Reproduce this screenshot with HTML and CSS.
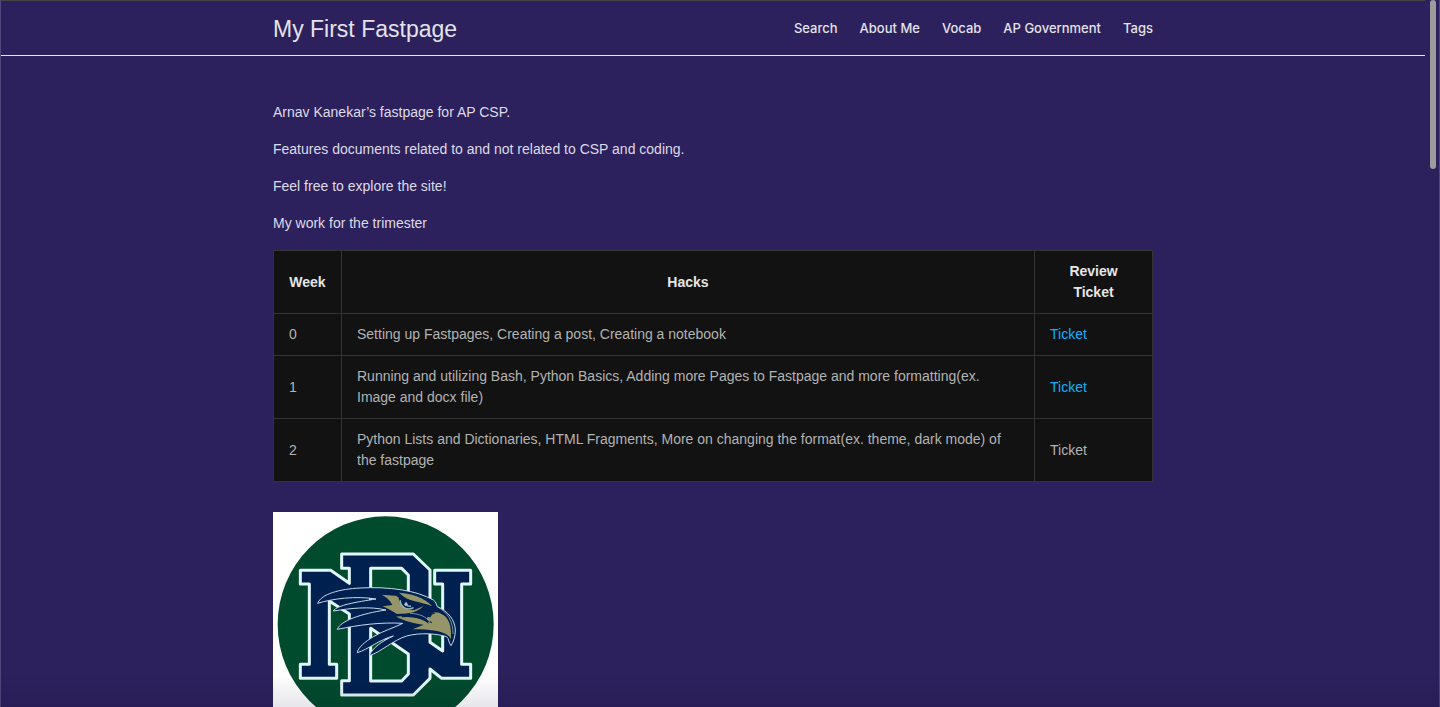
FILE: index.html
```
<!DOCTYPE html>
<html lang="en">
<head>
  <meta charset="utf-8">
  <meta name="viewport" content="width=device-width, initial-scale=1">
  <title>My First Fastpage</title>
  <link rel="stylesheet" href="styles.css">
</head>
<body class="page">
  <header class="site-header">
    <div class="wrapper header-row">
      <a class="site-title" href="#">My First Fastpage</a>
      <nav class="site-nav">
        <a href="#">Search</a>
        <a href="#">About Me</a>
        <a href="#">Vocab</a>
        <a href="#">AP Government</a>
        <a href="#">Tags</a>
      </nav>
    </div>
  </header>
  <main class="wrapper content">
    <p>Arnav Kanekar’s fastpage for AP CSP.</p>
    <p>Features documents related to and not related to CSP and coding.</p>
    <p>Feel free to explore the site!</p>
    <p>My work for the trimester</p>
    <table class="work">
      <colgroup><col class="col-week"><col><col class="col-ticket"></colgroup>
      <thead>
        <tr><th scope="col">Week</th><th scope="col">Hacks</th><th scope="col">Review Ticket</th></tr>
      </thead>
      <tbody>
        <tr><td>0</td><td>Setting up Fastpages, Creating a post, Creating a notebook</td><td><a href="#">Ticket</a></td></tr>
        <tr><td>1</td><td>Running and utilizing Bash, Python Basics, Adding more Pages to Fastpage and more formatting(ex. Image and docx file)</td><td><a href="#">Ticket</a></td></tr>
        <tr><td>2</td><td>Python Lists and Dictionaries, HTML Fragments, More on changing the format(ex. theme, dark mode) of the fastpage</td><td>Ticket</td></tr>
      </tbody>
    </table>
    <svg class="emblem" viewBox="39 36 675 675" role="img" aria-label="School emblem">
      <rect x="39" y="36" width="675" height="675" fill="#fff"/>
      <circle cx="377" cy="373" r="324" fill="#004b2d"/>
      <g stroke="#e2f8f8" stroke-width="9" stroke-linejoin="round">
        <path fill="#00214f" d="M121 211H212L268 250V205H245V162H460L510 210V427L548 453V252H524V211H632V252H605V493H632V535H545L510 507V535L460 585H245V542H268V342L208 303V493H230V535H121V493H148V252H121Z"/>
        <path fill="#004b2d" d="M332 205H425L445 225V310H332ZM332 385L445 462V522L425 543H332Z"/>
      </g>
      <path fill="#00214f" stroke="#c5d9ea" stroke-width="3" stroke-linejoin="round" d="M173 310C183 282 240 267 300 264C385 259 470 271 520 300C528 306 529 313 532 320C564 333 585 360 586 390C586 410 580 427 573 437C566 429 567 416 560 410C532 401 480 397 440 408C400 420 363 456 328 467C338 443 365 424 400 408C358 419 325 448 292 458C293 444 315 425 340 410C372 391 402 384 428 370C362 366 296 375 232 388C241 363 302 341 378 330C330 318 270 325 220 333C231 315 290 306 348 297C285 287 218 296 173 310Z"/>
      <g fill="#96956a">
        <path d="M417 278C454 280 493 292 516 318C484 310 446 306 417 278Z"/>
        <path d="M365 284L415 288C417 315 437 331 463 330L491 318C466 344 430 340 411 342C398 335 384 326 368 319L397 315C390 300 381 293 365 284Z"/>
        <path d="M408 350C447 344 484 355 506 371L500 355C511 336 530 331 546 343C567 354 575 378 573 417C562 397 528 388 458 388L491 374C461 371 432 361 408 350Z"/>
      </g>
      <path fill="none" stroke="#9bb3c2" stroke-width="4" d="M421 301C420 319 439 333 461 323M439 306C435 315 444 321 453 318"/>
      <circle cx="438" cy="313" r="5" fill="#b6c5ca"/>
      <path fill="#00214f" d="M502 351C507 341 517 337 527 340L517 343L511 352Z"/>
      <path fill="none" stroke="#00214f" stroke-width="4" d="M425 350C462 347 490 354 515 368M411 288C440 302 475 307 509 318"/>
      <path fill="none" stroke="#b6c5ca" stroke-width="2" d="M450 340C480 341 498 350 511 367M533 321C564 337 579 365 579 402"/>
    </svg>
  </main>
  <div class="scroll-thumb" aria-hidden="true"></div>
  <div class="edge-shade" aria-hidden="true"></div>
</body>
</html>
```
FILE: styles.css
```
* { box-sizing: border-box; }

html { background: #2c215c; }

.page {
  height: 100vh;
  margin: 0;
  padding-right: 14px;
  overflow: auto;
  scrollbar-width: none;
  border-left: 1px solid #51477a;
  border-right: 1px solid #51477a;
  background: #2c215c;
  color: #dedbe6;
  font: 14px/21px "Liberation Sans", Arial, sans-serif;
}

.wrapper {
  max-width: 880px;
  margin: 0 auto;
}

.site-header {
  border-top: 1px solid #444;
  border-bottom: 1px solid #e8e6ee;
}

.header-row {
  display: flex;
  align-items: center;
  justify-content: space-between;
  height: 54px;
}

.site-title {
  padding-top: 2px;
  color: #e4e2ea;
  font: 23px/52px "Liberation Sans", Arial, sans-serif;
  text-decoration: none;
  white-space: nowrap;
}

.site-nav {
  display: flex;
  gap: 22px;
  font: 500 13px/54px Inter, sans-serif;
}

.site-nav a {
  color: #e4e2ea;
  text-decoration: none;
}

.content { padding: 46px 0 30px; }

.content p { margin: 0 0 16px; }

.work {
  width: 100%;
  margin-bottom: 30px;
  border-collapse: collapse;
  table-layout: fixed;
  background: #121212;
  color: #b3b3b3;
}

.col-week { width: 68px; }
.col-ticket { width: 118px; }

.work th,
.work td {
  padding: 10px 15px;
  border: 1px solid #333;
  text-align: left;
}

.work th {
  color: #e6e6e6;
  text-align: center;
}

.work a {
  color: #0ab1ff;
  text-decoration: none;
}

.emblem {
  display: block;
  width: 225px;
  height: 225px;
}

.scroll-thumb {
  position: fixed;
  top: 0;
  right: 4px;
  width: 6px;
  height: 169px;
  border-radius: 3px;
  background: #9c9c9c;
}

.edge-shade {
  position: fixed;
  right: 0;
  bottom: 0;
  left: 0;
  height: 32px;
  background: linear-gradient(transparent, rgba(15, 5, 50, 0.1));
  pointer-events: none;
}
```
